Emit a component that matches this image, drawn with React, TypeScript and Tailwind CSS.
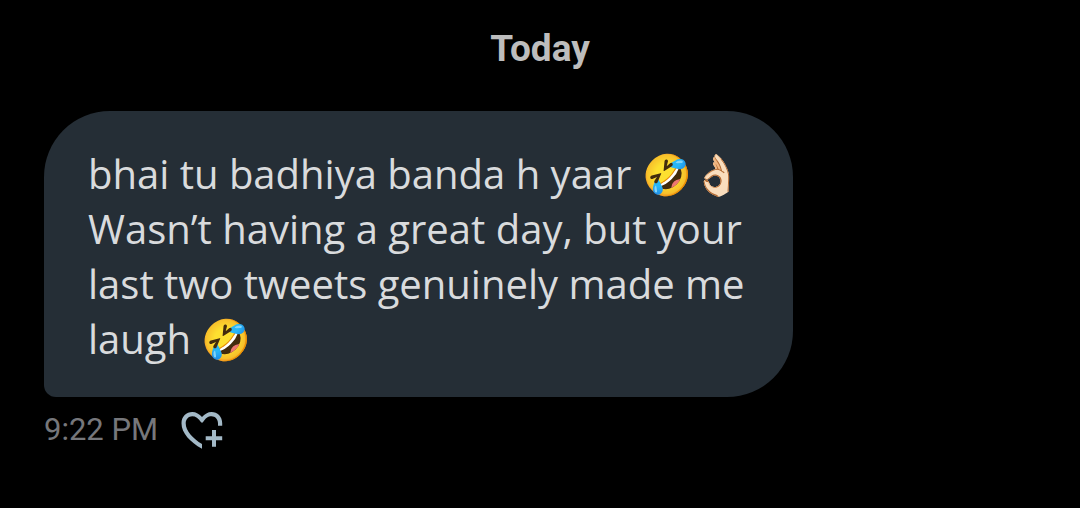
import { useState } from "react";

type ReactButtonProps = {
    liked: boolean;
    onToggle: () => void;
};

function ReactButton({ liked, onToggle }: ReactButtonProps) {
    return (
        <button type="button" aria-label="Add reaction" aria-pressed={liked} onClick={onToggle} className="cursor-pointer">
            <svg viewBox="0 0 44 40" className="w-11 h-10" fill="#a3b9c7">
                {/* Open heart */}
                <path d="M22 38.7C10 32 1.500 23 1.500 13.200C1.500 6.500 6.500 2 12.200 2C16 2 19.500 4 22 7C24.500 4 28 2 31.600 2C37.400 2 42.200 6.500 42.200 13.200V15.700H38V13.200C38 9 35 6.200 31.600 6.200C28 6.200 25.500 8 22.800 12.400H21.200C18.500 8 15.500 6.200 12.200 6.200C8.800 6.200 5.700 9 5.700 13.200C5.700 21 13 28.500 22 34Z" />
                {/* Plus */}
                <path d="M32 20H36V26.300H42.200V30.300H36V36.700H32V30.300H25.700V26.300H32Z" />
            </svg>
        </button>
    );
}

export default function App() {
    const [liked, setLiked] = useState(false);

    return (
        <main className="min-h-screen bg-black px-11 pt-[21px] pb-12 font-['Open_Sans','Noto_Sans',sans-serif]">
            <h2 className="text-center font-['Roboto',sans-serif] text-[37px] leading-14 font-bold text-[#bdbdbd]">Today</h2>

            <div className="mt-[34px] max-w-[749px] rounded-[66px] rounded-bl-[12px] bg-[#252e36] px-11 pt-[35px] pb-[31px]">
                <p className="text-[40px] leading-[55px] text-[#d9dbdd]">
                    bhai tu badhiya banda h yaar 🤣👌🏻
                    <br />
                    Wasn’t having a great day, but your last two tweets genuinely made me laugh 🤣
                </p>
            </div>

            <div className="mt-[13px] flex items-center gap-[22px]">
                <time className="font-['Roboto',sans-serif] text-[31px] leading-10 text-[#76777b]">9:22 PM</time>
                <ReactButton liked={liked} onToggle={() => setLiked(!liked)} />
            </div>
        </main>
    );
}
